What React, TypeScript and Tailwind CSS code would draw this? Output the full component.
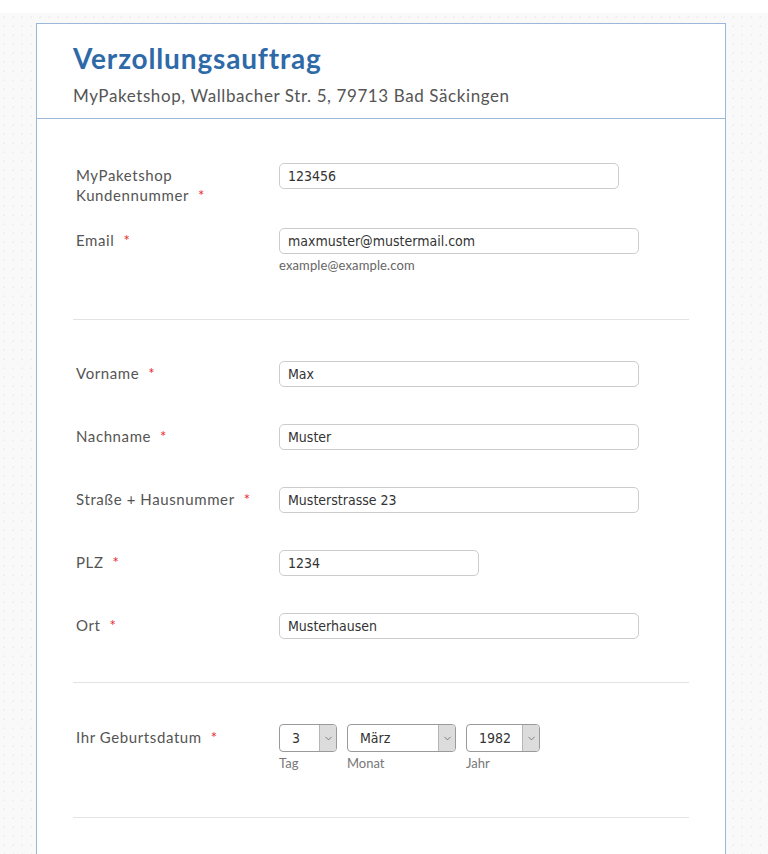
import { ChevronDown } from "lucide-react";

const font = { fontFamily: "Lato, 'Open Sans', sans-serif" };
const inputFont = { fontFamily: "'DejaVu Sans Condensed', 'Liberation Sans', sans-serif" };

function Req() {
  return <span className="ml-[9px] text-[#e8272b]">*</span>;
}

function TextRow({
  label,
  value,
  width,
  hint,
  className = "",
}: {
  label: React.ReactNode;
  value: string;
  width: string;
  hint?: string;
  className?: string;
}) {
  return (
    <div className={`flex items-start ${className}`}>
      <div className="w-[206px] shrink-0 pl-[3px] pt-[2px] text-[15px] leading-[20px] tracking-[0.04em] text-[#555]">
        {label}
      </div>
      <div className="flex flex-col">
        <input
          readOnly
          value={value}
          className={`${width} h-[26px] rounded-[5px] border border-[#cccccc] bg-white px-[8px] text-[14px] text-[#333] outline-none`}
          style={inputFont}
        />
        {hint && (
          <span className="mt-[3px] text-[13px] leading-[17px] tracking-[0.01em] text-[#666]">{hint}</span>
        )}
      </div>
    </div>
  );
}

function Select({ value, width, sub }: { value: string; width: string; sub: string }) {
  return (
    <div className="flex flex-col">
      <div className={`${width} flex h-[28px] overflow-hidden rounded-[4px] border border-[#9a9a9a] bg-white`}>
        <span className="flex flex-1 items-center pl-[12px] text-[14px] text-[#333]" style={inputFont}>
          {value}
        </span>
        <span className="flex w-[17px] items-center justify-center border-l border-[#b5b5b5] bg-[#dcdcdc]">
          <ChevronDown className="h-[11px] w-[11px] text-[#555]" strokeWidth={1.5} />
        </span>
      </div>
      <span className="mt-[3px] text-[13px] leading-[16px] text-[#777]">{sub}</span>
    </div>
  );
}

export default function App() {
  return (
    <div className="min-h-screen bg-white pt-[13px]" style={font}>
      <div className="min-h-[841px] bg-[#f9f9f9] bg-[radial-gradient(#eeeeee_1px,transparent_1px)] bg-[length:9px_9px] pt-[10px]">
        <div className="ml-[36px] w-[690px] border border-[#9bb7d9] bg-white">
          <div className="border-b border-[#9bb7d9] px-[36px] pb-[11px] pt-[16px]">
            <h1 className="text-[28px] font-bold leading-[36px] tracking-[0.03em] text-[#2e69a8]">
              Verzollungsauftrag
            </h1>
            <p className="mt-[9px] text-[17px] leading-[22px] tracking-[0.035em] text-[#555]">
              MyPaketshop, Wallbacher Str. 5, 79713 Bad Säckingen
            </p>
          </div>

          <div className="px-[36px]">
            <div className="border-b border-[#e3e3e3] pb-[45px] pt-[44px]">
              <TextRow
                label={
                  <>
                    MyPaketshop
                    <br />
                    Kundennummer
                    <Req />
                  </>
                }
                value="123456"
                width="w-[340px]"
              />
              <TextRow
                className="mt-[23px]"
                label={
                  <>
                    Email
                    <Req />
                  </>
                }
                value="maxmuster@mustermail.com"
                width="w-[360px]"
                hint="example@example.com"
              />
            </div>

            <div className="flex flex-col gap-[37px] border-b border-[#e3e3e3] pb-[43px] pt-[41px]">
              <TextRow label={<>Vorname<Req /></>} value="Max" width="w-[360px]" />
              <TextRow label={<>Nachname<Req /></>} value="Muster" width="w-[360px]" />
              <TextRow label={<>Straße + Hausnummer<Req /></>} value="Musterstrasse 23" width="w-[360px]" />
              <TextRow label={<>PLZ<Req /></>} value="1234" width="w-[200px]" />
              <TextRow label={<>Ort<Req /></>} value="Musterhausen" width="w-[360px]" />
            </div>

            <div className="flex items-start border-b border-[#e3e3e3] pb-[46px] pt-[41px]">
              <div className="w-[206px] shrink-0 pl-[3px] pt-[3px] text-[15px] leading-[20px] tracking-[0.04em] text-[#555]">
                Ihr Geburtsdatum
                <Req />
              </div>
              <div className="flex gap-[10px]">
                <Select value="3" width="w-[58px]" sub="Tag" />
                <Select value="März" width="w-[109px]" sub="Monat" />
                <Select value="1982" width="w-[74px]" sub="Jahr" />
              </div>
            </div>
            <div className="h-[60px]" />
          </div>
        </div>
      </div>
    </div>
  );
}
